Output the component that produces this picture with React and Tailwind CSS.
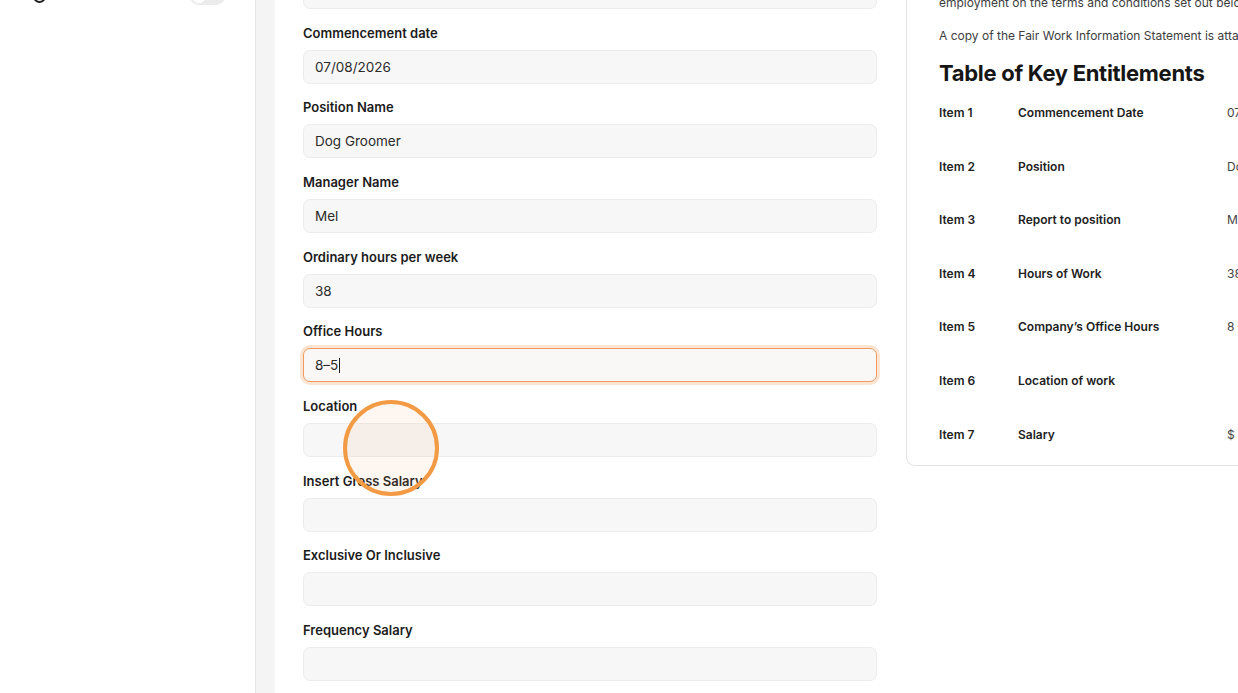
import React from 'react';

const font = { fontFamily: 'Inter, "Noto Sans", sans-serif' };

const fields = [
  { label: 'Employee Name', value: 'Sarah Jones' },
  { label: 'Commencement date', value: '07/08/2026' },
  { label: 'Position Name', value: 'Dog Groomer' },
  { label: 'Manager Name', value: 'Mel' },
  { label: 'Ordinary hours per week', value: '38' },
  { label: 'Office Hours', value: '8–5', focused: true },
  { label: 'Location', value: '' },
  { label: 'Insert Gross Salary', value: '' },
  { label: 'Exclusive Or Inclusive', value: '' },
  { label: 'Frequency Salary', value: '' },
];

const entitlements = [
  ['Item 1', 'Commencement Date', '07/08/2026'],
  ['Item 2', 'Position', 'Dog Groomer'],
  ['Item 3', 'Report to position', 'Mel'],
  ['Item 4', 'Hours of Work', '38'],
  ['Item 5', 'Company’s Office Hours', '8 – 5'],
  ['Item 6', 'Location of work', ''],
  ['Item 7', 'Salary', '$ 0.00'],
];

function Sidebar() {
  return (
    <aside className="relative w-[256px] shrink-0 border-r border-[#e6e6e6] bg-white">
      <div className="-mt-[14px] flex h-[20px] items-center px-[33px]">
        <span className="h-[13px] w-[13px] rounded-full border-2 border-[#222]" />
        <span className="ml-[11px] text-[12px] text-[#f3ecd9]">Notifications</span>
        <span className="ml-auto mr-[-3px] flex h-[18px] w-[35px] items-center rounded-full bg-[#ececec] px-[2px]">
          <span className="h-[14px] w-[14px] rounded-full bg-white" />
        </span>
      </div>
    </aside>
  );
}

function Field({ label, value, focused }) {
  return (
    <div className="flex flex-col">
      <label className="text-[13px] font-semibold leading-[18px] text-[#1c1c1c]">{label}</label>
      <div
        className={`mt-[8px] flex h-[34px] items-center rounded-[7px] border px-[11px] text-[13.5px] text-[#2b2b2b] ${
          focused
            ? 'border-[#ef9a5e] bg-[#faf8f7] shadow-[0_0_0_3px_rgba(249,160,100,0.28)]'
            : 'border-[#ececec] bg-[#f7f7f7]'
        }`}
      >
        {value}
        {focused ? <span className="ml-[1px] h-[15px] w-px bg-[#222]" /> : null}
      </div>
    </div>
  );
}

function EntitlementsCard() {
  return (
    <section className="-mt-px flex h-[467px] w-[420px] shrink-0 flex-col rounded-bl-[9px] border-b border-l border-[#e4e4e4] bg-white pl-[32px]">
      <p className="-mt-[5px] whitespace-nowrap text-[12px] leading-[18px] text-[#3d3d3d]">
        employment on the terms and conditions set out below.
      </p>
      <p className="mt-[15px] whitespace-nowrap text-[12px] leading-[18px] text-[#3d3d3d]">
        A copy of the Fair Work Information Statement is attached.
      </p>
      <h2 className="mt-[13px] whitespace-nowrap text-[22px] font-bold leading-[30px] tracking-[-0.3px] text-[#161616]">
        Table of Key Entitlements
      </h2>
      <div className="mt-[16px] flex flex-col">
        {entitlements.map(([item, name, value]) => (
          <div key={item} className="flex h-[53.6px] items-start text-[12px] leading-[18px]">
            <span className="w-[79px] shrink-0 font-semibold text-[#222]">{item}</span>
            <span className="w-[209px] shrink-0 whitespace-nowrap font-semibold text-[#222]">{name}</span>
            <span className="shrink-0 whitespace-nowrap text-[#444]">{value}</span>
          </div>
        ))}
      </div>
    </section>
  );
}

export default function App() {
  return (
    <div className="flex h-[693px] w-[1238px] overflow-hidden bg-white" style={font}>
      <Sidebar />
      <div className="w-[19px] shrink-0 bg-[#f4f4f4]" />
      <main className="relative flex min-w-0 flex-1 overflow-hidden">
        <div className="mt-[-51px] flex w-[602px] shrink-0 flex-col gap-[14.66px] pl-[28px]">
          {fields.map((f) => (
            <Field key={f.label} {...f} />
          ))}
        </div>
        <div className="ml-[29px] shrink-0">
          <EntitlementsCard />
        </div>
        {/* click ripple */}
        <span className="pointer-events-none absolute left-[68px] top-[400px] h-[96px] w-[96px] rounded-full border-[4px] border-[#f39a45] bg-[#f7b27a]/10" />
      </main>
    </div>
  );
}
